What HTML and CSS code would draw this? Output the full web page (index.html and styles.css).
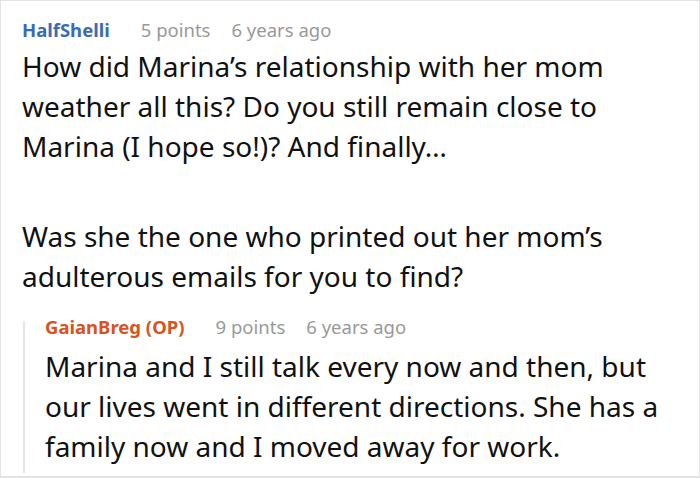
FILE: index.html
```html
<!DOCTYPE html>
<html>
<head>
<meta charset="utf-8">
<link rel="stylesheet" href="styles.css">
</head>
<body>
<div class="frame">
  <div class="comment">
    <div class="meta">
      <span class="author">HalfShelli</span>
      <span class="info">5 points</span>
      <span class="info">6 years ago</span>
    </div>
    <div class="text">
      <p>How did Marina’s relationship with her mom weather all this? Do you still remain close to Marina (I hope so!)? And finally…</p>
      <p>Was she the one who printed out her mom’s adulterous emails for you to find?</p>
    </div>
  </div>
  <div class="reply">
    <div class="meta">
      <span class="author op">GaianBreg (OP)</span>
      <span class="info">9 points</span>
      <span class="info">6 years ago</span>
    </div>
    <div class="text">
      <p>Marina and I still talk every now and then, but our lives went in different directions. She has a family now and I moved away for work.</p>
    </div>
  </div>
</div>
</body>
</html>
```
FILE: styles.css
```css
html, body {
  margin: 0;
  padding: 0;
  background: #fff;
}
.frame {
  width: 700px;
  height: 478px;
  box-sizing: border-box;
  border: 1px solid #e3e3e3;
  border-bottom-width: 2px;
  overflow: hidden;
  font-family: "Noto Sans", sans-serif;
  padding: 17px 0 0 21px;
}
.meta {
  display: flex;
  align-items: baseline;
  gap: 21px;
  font-size: 18.5px;
  line-height: 24px;
}
.author {
  font-weight: 700;
  color: #3a6bb5;
  margin-right: 10px;
}
.author.op {
  color: #d9531e;
}
.info {
  color: #999;
}
.text {
  font-size: 28px;
  line-height: 40px;
  color: #111;
}
.text p {
  margin: 0;
}
.text p + p {
  margin-top: 50px;
}
.comment .text {
  margin-top: 4px;
  width: 660px;
}
.reply {
  margin-top: 25px;
  margin-left: 1px;
  border-left: 2px solid #e6e6e6;
  padding-left: 20px;
  padding-bottom: 7px;
}
.reply .meta {
  line-height: 12px;
}
.reply .text {
  margin-top: 13px;
  width: 640px;
}
```
